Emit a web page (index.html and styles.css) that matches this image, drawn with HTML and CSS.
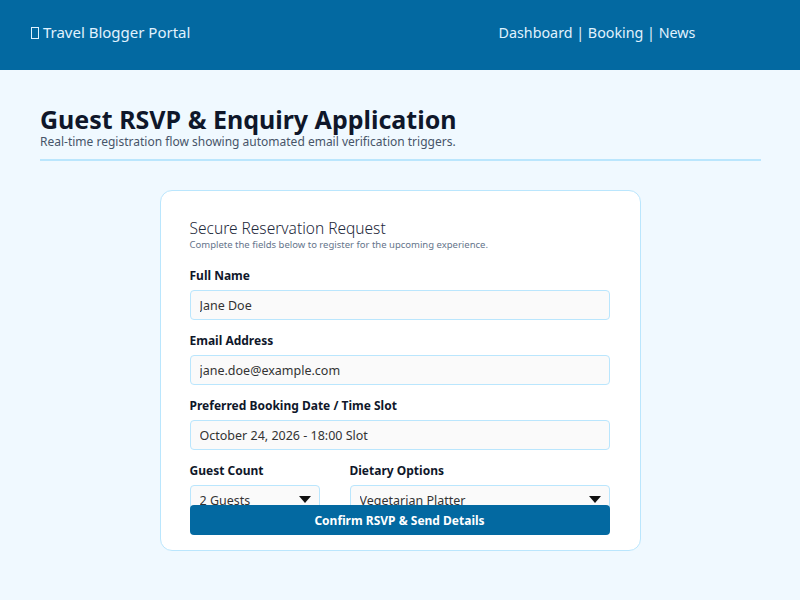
FILE: index.html
```html
<!DOCTYPE html>
<html lang="en">
<head>
  <meta charset="UTF-8">
  <meta name="viewport" content="width=device-width, initial-scale=1.0">
  <title>Guest RSVP &amp; Enquiry Application</title>
  <link rel="stylesheet" href="styles.css">
</head>
<body>
  <header class="top-bar">
    <div class="brand"><span class="tofu"></span> Travel Blogger Portal</div>
    <nav class="top-nav">Dashboard | Booking | News</nav>
  </header>

  <!-- Page intro -->
  <main class="page">
    <div class="page-head">
      <h1>Guest RSVP &amp; Enquiry Application</h1>
      <p>Real-time registration flow showing automated email verification triggers.</p>
    </div>

    <!-- Reservation form card -->
    <form class="card" onsubmit="return false">
      <h2>Secure Reservation Request</h2>
      <p class="hint">Complete the fields below to register for the upcoming experience.</p>

      <label class="field">
        <span>Full Name</span>
        <input type="text" value="Jane Doe">
      </label>
      <label class="field">
        <span>Email Address</span>
        <input type="email" value="jane.doe@example.com">
      </label>
      <label class="field">
        <span>Preferred Booking Date / Time Slot</span>
        <input type="text" value="October 24, 2026 - 18:00 Slot">
      </label>

      <div class="row">
        <label class="field">
          <span>Guest Count</span>
          <div class="select-wrap">
            <select><option>2 Guests</option><option>1 Guest</option><option>3 Guests</option></select>
          </div>
        </label>
        <label class="field">
          <span>Dietary Options</span>
          <div class="select-wrap">
            <select><option>Vegetarian Platter</option><option>Standard Menu</option><option>Vegan</option></select>
          </div>
        </label>
      </div>

      <button class="confirm-btn" type="submit">Confirm RSVP &amp; Send Details</button>
    </form>
  </main>
</body>
</html>
```

FILE: styles.css
```css
* { margin: 0; padding: 0; box-sizing: border-box; font-family: 'Noto Sans', sans-serif; }
body { background: #f0f9ff; color: #0f172a; }

.top-bar {
  background: #0369a1;
  color: #e0f2fe;
  height: 70px;
  display: flex;
  align-items: center;
  padding-bottom: 6px;
  font-size: 15px;
}
.brand { flex: 1; padding-left: 31px; }
.tofu {
  display: inline-block;
  width: 8px;
  height: 12px;
  border: 1px solid #e0f2fe;
  vertical-align: -1px;
}
.top-nav { flex: 0 0 400px; text-align: center; font-size: 14.3px; padding-right: 6px; }

.page { padding: 35px 40px 40px; }
.page-head {
  border-bottom: 2px solid #bae6fd;
  padding-bottom: 9px;
  margin-bottom: 29px;
  margin-right: -1px;
}
.page-head h1 {
  font-size: 25px;
  font-weight: bold;
  line-height: 29px;
}
.page-head p {
  font-size: 12px;
  color: #475569;
  line-height: 16px;
}

.card {
  width: 481px;
  margin: 0 auto;
  background: #fff;
  border: 1px solid #bae6fd;
  border-radius: 12px;
  padding: 27px 30px 15px 29px;
}
.card h2 {
  font-size: 15.5px;
  font-weight: 300;
  color: #1e293b;
  line-height: 20px;
}
.hint {
  font-size: 9.5px;
  line-height: 12px;
  color: #64748b;
  margin-top: 1px;
  margin-bottom: 17px;
}

.field { display: block; margin-bottom: 13px; }
.field span {
  display: block;
  font-size: 12px;
  line-height: 16px;
  font-weight: bold;
  color: #0f172a;
  margin-bottom: 6px;
}
.field input, .field select {
  display: block;
  width: 100%;
  height: 30px;
  padding: 0 9px;
  background: #fafafa;
  border: 1px solid #bae6fd;
  border-radius: 4px;
  font-size: 12.5px;
  color: #333;
  outline: none;
}
.field select { appearance: none; -webkit-appearance: none; }

.row {
  display: grid;
  grid-template-columns: 1fr 2fr;
  gap: 30px;
}
.row .field { margin-bottom: 0; }
.select-wrap { position: relative; }
.select-wrap::after {
  content: "";
  position: absolute;
  right: 9px;
  top: 11px;
  border-left: 6px solid transparent;
  border-right: 6px solid transparent;
  border-top: 7px solid #111;
}

.confirm-btn {
  display: block;
  position: relative;
  width: 100%;
  height: 30px;
  margin-top: -10px;
  background: #0369a1;
  color: #fff;
  border: none;
  border-radius: 4px;
  font-size: 12px;
  font-weight: bold;
  cursor: pointer;
}
```
